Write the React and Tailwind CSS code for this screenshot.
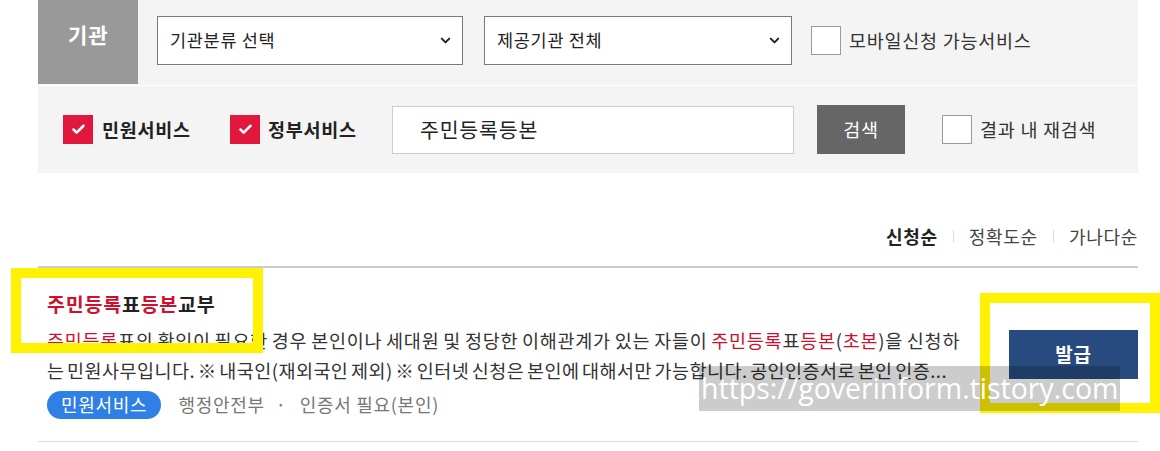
import { Check, ChevronDown } from 'lucide-react';

const FONT = { fontFamily: '"Noto Sans CJK KR", "Noto Sans", sans-serif' };

const Select = ({ label, width }) => (
    <div className={`mt-[16px] flex h-[49px] ${width} items-center justify-between border border-[#7a7a7a] bg-white pl-[12px] pr-[9px]`}>
        <span className="text-[17.5px] tracking-[0.04em] text-[#222]">{label}</span>
        <ChevronDown className="h-[15px] w-[15px] text-[#222]" strokeWidth={3.2} />
    </div>
);

const Box = ({ checked }) =>
    checked ? (
        <span className="flex h-[29px] w-[30px] shrink-0 items-center justify-center bg-[#e1173d]">
            <Check className="h-[15px] w-[15px] text-white" strokeWidth={4} />
        </span>
    ) : (
        <span className="h-[29px] w-[30px] shrink-0 border border-[#9a9a9a] bg-white" />
    );

const Red = ({ children }) => <span className="text-[#cf102d]">{children}</span>;

export default function App() {
    return (
        <div className="relative h-[451px] w-[1160px] overflow-hidden bg-white" style={FONT}>
            <div className="mx-[38px] w-[1100px]">
                {/* Filter panel */}
                <div className="bg-[#f4f4f4]">
                    <div className="flex h-[85px] items-start">
                        <div className="h-[84px] w-[100px] bg-[#999999] pt-[21px] pl-[30px] text-[21px] font-bold leading-[26px] tracking-[0.04em] text-white">
                            기관
                        </div>
                        <div className="ml-[19px]">
                            <Select label="기관분류 선택" width="w-[306px]" />
                        </div>
                        <div className="ml-[21px]">
                            <Select label="제공기관 전체" width="w-[308px]" />
                        </div>
                        <div className="ml-[19px] mt-[26px] flex items-center">
                            <Box />
                            <span className="ml-[8px] text-[18.5px] tracking-[0.04em] text-[#333]">모바일신청 가능서비스</span>
                        </div>
                    </div>
                    <div className="h-px bg-white" />
                    <div className="flex h-[87px] items-center">
                        <div className="ml-[25px] flex w-[167px] items-center">
                            <Box checked />
                            <span className="ml-[9px] text-[18.5px] font-bold tracking-[0.04em] text-[#222]">민원서비스</span>
                        </div>
                        <div className="flex w-[162px] items-center">
                            <Box checked />
                            <span className="ml-[8px] text-[18.5px] font-bold tracking-[0.04em] text-[#222]">정부서비스</span>
                        </div>
                        <div className="flex h-[48px] w-[402px] items-center border border-[#cccccc] bg-white pl-[27px] text-[20.5px] tracking-[0.04em] text-[#222]">
                            주민등록등본
                        </div>
                        <button className="ml-[23px] h-[49px] w-[88px] bg-[#666666] text-[18.5px] tracking-[0.04em] text-white">검색</button>
                        <div className="ml-[37px] flex items-center">
                            <Box />
                            <span className="ml-[8px] text-[18.5px] tracking-[0.04em] text-[#333]">결과 내 재검색</span>
                        </div>
                    </div>
                </div>

                {/* Sort */}
                <div className="flex h-[93px] items-end justify-end pb-[17px] text-[18px] leading-[26px] tracking-[0.04em]">
                    <span className="font-bold text-[#222]">신청순</span>
                    <span className="mx-[15px] mb-[6px] h-[13px] w-px bg-[#dddddd]" />
                    <span className="text-[#444]">정확도순</span>
                    <span className="mx-[15px] mb-[6px] h-[13px] w-px bg-[#dddddd]" />
                    <span className="text-[#444]">가나다순</span>
                </div>
                <div className="h-[2px] bg-[#cccccc]" />

                {/* Result item */}
                <div className="flex h-[174px] items-center justify-between border-b border-[#dddddd]">
                    <div className="ml-[9px] w-[924px]">
                        <div className="text-[19.5px] font-bold leading-[26px] tracking-[0.04em] text-[#222]">
                            <Red>주민등록</Red>표<Red>등본</Red>교부
                        </div>
                        <div className="mt-[8px] text-[18.5px] leading-[30px] text-[#333]">
                            <div className="whitespace-nowrap tracking-[0.04em] [word-spacing:-1px]">
                                <Red>주민등록</Red>표의 확인이 필요한 경우 본인이나 세대원 및 정당한 이해관계가 있는 자들이 <Red>주민등록</Red>표<Red>등본</Red>(<Red>초본</Red>)을 신청하
                            </div>
                            <div className="w-[924px] overflow-hidden text-ellipsis whitespace-nowrap tracking-[0.025em] [word-spacing:-2px]">
                                는 민원사무입니다. ※ 내국인(재외국인 제외) ※ 인터넷 신청은 본인에 대해서만 가능합니다. 공인인증서로 본인 인증...
                            </div>
                        </div>
                        <div className="mt-[6px] flex items-center text-[18px] tracking-[0.04em] text-[#777]">
                            <span className="flex h-[28px] items-center rounded-full bg-[#2f80e4] px-[14px] text-white">민원서비스</span>
                            <span className="ml-[17px]">행정안전부</span>
                            <span className="mx-[11px]">·</span>
                            <span className="ml-[2px]">인증서 필요(본인)</span>
                        </div>
                    </div>
                    <button className="h-[49px] w-[129px] bg-[#274b7f] text-[19px] font-bold tracking-[0.04em] text-white">발급</button>
                </div>
            </div>

            {/* Highlight marks */}
            <div className="absolute left-[11px] top-[268px] h-[85px] w-[252px] border-[10px] border-[#fff200]" />
            <div className="absolute left-[980px] top-[293px] h-[120px] w-[180px] border-[10px] border-[#fff200]" />

            {/* Watermark */}
            <div
                className="absolute left-[699px] top-[366px] flex h-[45px] w-[421px] items-center overflow-hidden whitespace-nowrap bg-black/20 pl-[2px] text-[28.5px] leading-none text-white"
                style={{ fontFamily: '"Open Sans", sans-serif' }}
            >
                https://goverinform.tistory.com
            </div>
        </div>
    );
}
